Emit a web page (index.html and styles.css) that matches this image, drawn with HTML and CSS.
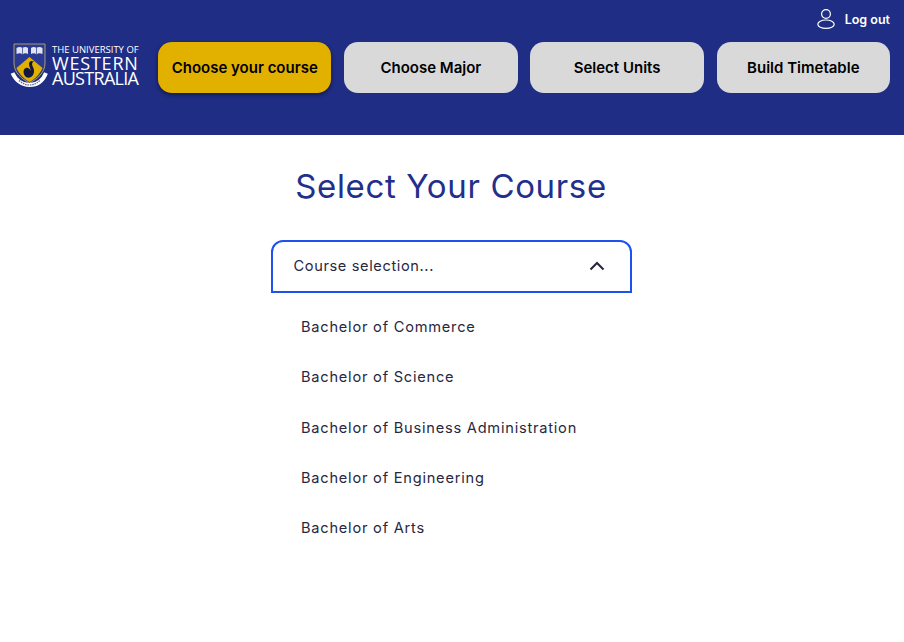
FILE: index.html
```html
<!DOCTYPE html>
<html lang="en">

<head>
    <meta charset="UTF-8">
    <meta name="viewport" content="width=device-width, initial-scale=1.0">
    <title>Select Your Course</title>
    <link rel="stylesheet" href="styles.css">
</head>

<body>
    <header class="header">
        <div class="topbar">
            <a class="logout" href="#">
                <svg class="logout-icon" width="18" height="20" viewBox="0 0 18 20" fill="none" stroke="#fff" stroke-width="1.2">
                    <circle cx="9" cy="5" r="4.4" />
                    <ellipse cx="9" cy="15.2" rx="8.2" ry="4.2" />
                </svg>
                <span>Log out</span>
            </a>
        </div>
        <nav class="nav">
            <div class="logo">
                <svg class="crest" width="38" height="46" viewBox="0 0 38 46">
                    <!-- shield -->
                    <path d="M4 1 H35 V20 C35 30 27 36 19.5 40 C12 36 4 30 4 20 Z" fill="#2a3a92" stroke="#cdb768" stroke-width="0.8" />
                    <path d="M19.5 14 L32.5 25 C30 31 25 36 19.5 39 C14 36 9 31 6.5 25 Z" fill="#e2b100" />
                    <!-- books -->
                    <path d="M6.5 5 C9 3.5 11 4 12.5 5 C14 4 16 3.5 18 5 V11 C16 10 14 10 12.5 11.5 C11 10 9 10 6.5 11 Z" fill="#dfe3f2" />
                    <path d="M21 5 C23 3.5 25 4 26.5 5 C28 4 30 3.5 32.5 5 V11 C30 10 28 10 26.5 11.5 C25 10 23 10 21 11 Z" fill="#dfe3f2" />
                    <path d="M12.5 5 V11.5 M26.5 5 V11.5" stroke="#2a3a92" stroke-width="0.7" />
                    <!-- swan -->
                    <path d="M15 33 C12 29 14 24 18 25 C20 26 21 27 21 29 C21 26 19 24 19 21 C19 18 22 17 24 19 C22 19 21.5 21 23 24 C25 28 24 32 21 34 C19 35 16.5 35 15 33 Z" fill="#14183c" />
                    <!-- motto ribbon -->
                    <path d="M2.5 30 C6 37.5 12 42 19.5 42 C27 42 33 37.5 36 30" fill="none" stroke="#fff" stroke-width="4" />
                    <path d="M9 37.5 C13 41 16 42 19.5 42 C23 42 26 41 30 37.5" fill="none" stroke="#59608f" stroke-width="1.2" stroke-dasharray="1.6 0.8" />
                </svg>
                <div class="wordmark">
                    <span class="wordmark-small">THE UNIVERSITY OF</span>
                    <span class="wordmark-big wordmark-wide">WESTERN</span>
                    <span class="wordmark-big">AUSTRALIA</span>
                </div>
            </div>
            <a class="step step-active" href="#">Choose your course</a>
            <a class="step" href="#">Choose Major</a>
            <a class="step" href="#">Select Units</a>
            <a class="step" href="#">Build Timetable</a>
        </nav>
    </header>

    <main class="main">
        <h1 class="title">Select Your Course</h1>
        <div class="dropdown">
            <div class="dropdown-head">
                <span>Course selection...</span>
                <svg width="16" height="10" viewBox="0 0 16 10" fill="none" stroke="#27273f" stroke-width="2">
                    <path d="M1.5 8.5 L8 2 L14.5 8.5" />
                </svg>
            </div>
            <ul class="dropdown-list">
                <li>Bachelor of Commerce</li>
                <li>Bachelor of Science</li>
                <li>Bachelor of Business Administration</li>
                <li>Bachelor of Engineering</li>
                <li>Bachelor of Arts</li>
            </ul>
        </div>
    </main>
</body>

</html>
```

FILE: styles.css
```css
* {
    box-sizing: border-box;
}

body {
    margin: 0;
    background-color: white;
    font-family: "Inter", sans-serif;
}

.header {
    height: 135px;
    background-color: #1f2d84;
    padding: 7px 14px 0 10px;
}

.topbar {
    display: flex;
    justify-content: flex-end;
    height: 35px;
}

.logout {
    display: flex;
    align-items: center;
    gap: 10px;
    height: 24px;
    color: white;
    font-size: 12.5px;
    font-weight: 600;
    text-decoration: none;
}

.nav {
    display: flex;
    align-items: center;
    height: 51px;
}

.logo {
    display: flex;
    align-items: center;
    gap: 4px;
    width: 148px;
    flex-shrink: 0;
    margin-top: -3px;
}

.wordmark {
    display: flex;
    flex-direction: column;
    color: white;
    font-family: "Open Sans", sans-serif;
    line-height: 1;
}

.wordmark-small {
    font-size: 9.5px;
    white-space: nowrap;
    margin-bottom: 1px;
}

.wordmark-big {
    font-size: 18px;
    line-height: 15.5px;
    letter-spacing: -0.7px;
}

.wordmark-wide {
    letter-spacing: 0.8px;
}

.step {
    display: flex;
    justify-content: center;
    align-items: center;
    width: 173.5px;
    height: 51px;
    margin-right: 12.8px;
    border-radius: 14px;
    background-color: #d9d9d9;
    color: black;
    font-size: 15px;
    font-weight: 600;
    text-decoration: none;
}

.step:last-child {
    margin-right: 0;
}

.step-active {
    background-color: #e2b100;
    box-shadow: 0 2px 4px rgba(0, 0, 0, 0.45);
}

.main {
    display: flex;
    flex-direction: column;
    align-items: center;
    padding: 30px 2px 0 0;
}

.title {
    margin: 0 0 33px;
    color: #222f8b;
    font-family: "Inter", sans-serif;
    font-size: 33px;
    font-weight: 400;
    line-height: 42px;
    letter-spacing: 0.65px;
}

.dropdown {
    width: 361px;
    color: #27273f;
    font-family: "Inter", sans-serif;
    font-size: 14.6px;
    letter-spacing: 0.78px;
}

.dropdown-head {
    display: flex;
    justify-content: space-between;
    align-items: center;
    height: 53px;
    padding: 0 25px 2px 21px;
    border: 2px solid #1f50f0;
    border-radius: 12px 12px 0 0;
    letter-spacing: 0.62px;
}

.dropdown-list {
    list-style: none;
    margin: 9px 0 0;
    padding: 0 0 0 30.5px;
}

.dropdown-list li {
    height: 50.3px;
    display: flex;
    align-items: center;
}
```
